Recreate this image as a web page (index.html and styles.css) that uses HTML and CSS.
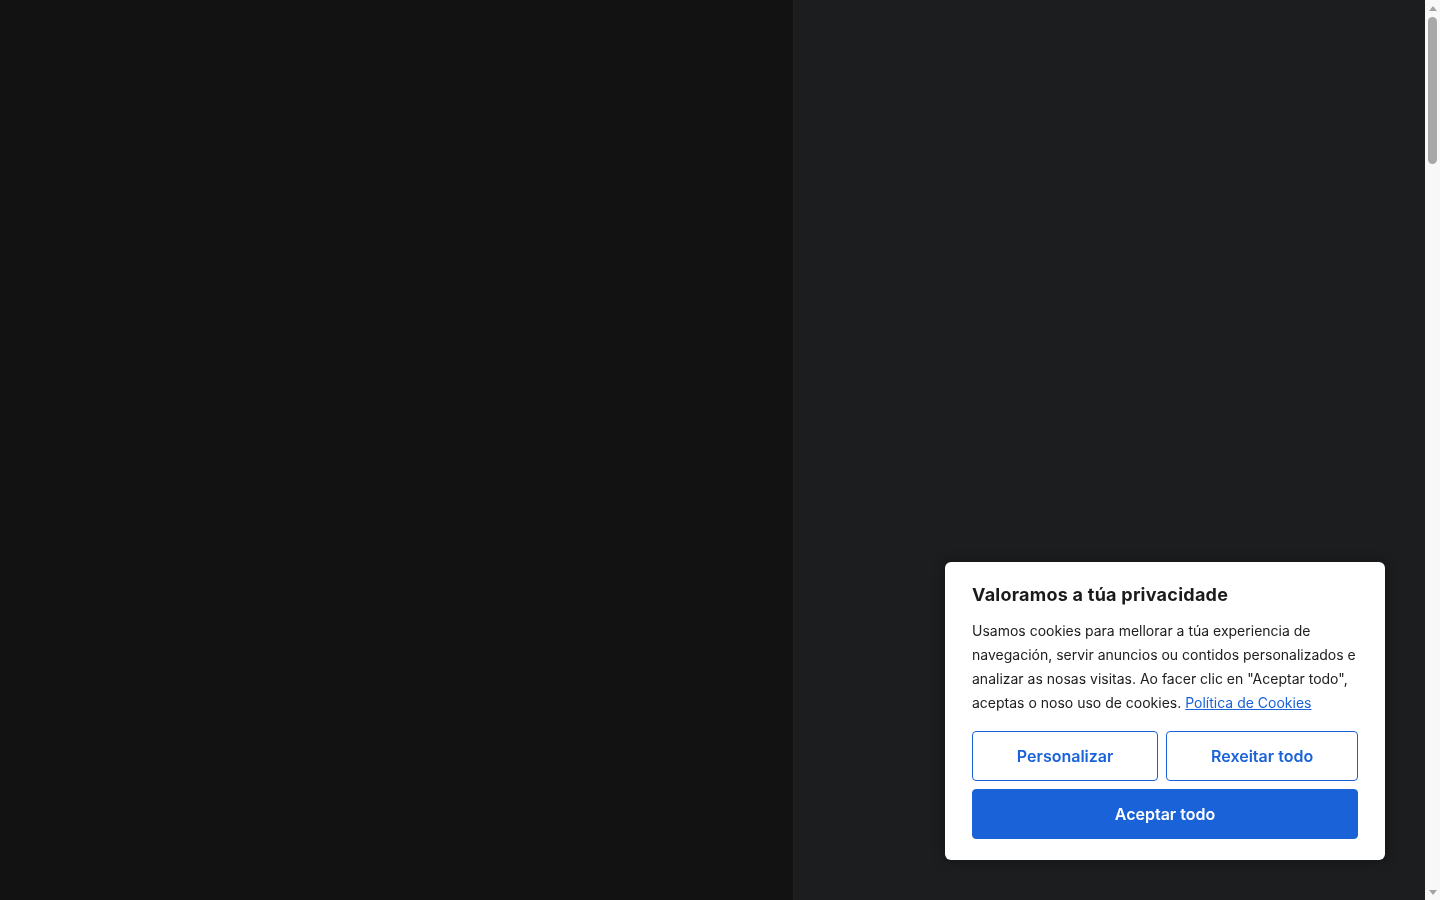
FILE: index.html
```html
<!DOCTYPE html>
<html lang="gl">
<head>
<meta charset="utf-8">
<title>Privacidade</title>
<link rel="stylesheet" href="styles.css">
</head>
<body>
<div class="layout">
  <div class="page">
    <div class="left-pane"></div>
    <div class="right-pane"></div>
  </div>
  <div class="scrollbar" aria-hidden="true">
    <div class="sb-arrow sb-up"></div>
    <div class="sb-track"><div class="sb-thumb"></div></div>
    <div class="sb-arrow sb-down"></div>
  </div>
</div>
<div class="cookie-banner" role="dialog" aria-label="Valoramos a túa privacidade">
  <h2 class="cookie-title">Valoramos a túa privacidade</h2>
  <p class="cookie-text">Usamos cookies para mellorar a túa experiencia de navegación, servir anuncios ou contidos personalizados e analizar as nosas visitas. Ao facer clic en "Aceptar todo", aceptas o noso uso de cookies. <a href="#" class="cookie-link">Política de Cookies</a></p>
  <div class="cookie-actions">
    <div class="cookie-row">
      <button class="btn btn-outline">Personalizar</button>
      <button class="btn btn-outline">Rexeitar todo</button>
    </div>
    <button class="btn btn-primary">Aceptar todo</button>
  </div>
</div>
</body>
</html>
```
FILE: styles.css
```css
html, body {
  margin: 0;
  padding: 0;
  height: 100%;
  overflow: hidden;
}
body {
  background: #1c1d1f;
  font-family: "Inter", "Noto Sans", "Liberation Sans", sans-serif;
}
.layout {
  display: flex;
  height: 100vh;
}
.page {
  flex: 1;
  display: flex;
}
.left-pane {
  flex: 0 0 793px;
  background: #121212;
}
.right-pane {
  flex: 1;
  background: #1c1d1f;
  border-left: 1px solid #202124;
}
.scrollbar {
  flex: 0 0 15px;
  display: flex;
  flex-direction: column;
  align-items: center;
  background: #f8f8f8;
}
.sb-arrow {
  flex: 0 0 15px;
  width: 15px;
  display: flex;
  align-items: center;
  justify-content: center;
}
.sb-up::before {
  content: "";
  width: 0;
  height: 0;
  border-left: 4px solid transparent;
  border-right: 4px solid transparent;
  border-bottom: 5px solid #a3a3a3;
  margin-top: 1px;
}
.sb-down::before {
  content: "";
  width: 0;
  height: 0;
  border-left: 4px solid transparent;
  border-right: 4px solid transparent;
  border-top: 5px solid #a3a3a3;
  margin-bottom: 1px;
}
.sb-track {
  flex: 1;
  width: 15px;
  display: flex;
  justify-content: center;
  padding-top: 2px;
  box-sizing: border-box;
}
.sb-thumb {
  width: 9px;
  height: 147px;
  border-radius: 5px;
  background: #a8a8a8;
}
.cookie-banner {
  position: fixed;
  right: 55px;
  bottom: 40px;
  width: 440px;
  box-sizing: border-box;
  background: #ffffff;
  border-radius: 6px;
  padding: 21px 27px 21px;
  box-shadow: 0 0 12px rgba(0, 0, 0, 0.35);
}
.cookie-title {
  margin: 0 0 12px;
  font-size: 18px;
  line-height: 24px;
  font-weight: 700;
  letter-spacing: 0.25px;
  color: #1b1b1b;
}
.cookie-text {
  margin: 0 0 16px;
  font-size: 14px;
  line-height: 24px;
  color: #202020;
}
.cookie-link {
  color: #1a62d8;
  text-decoration: underline;
}
.cookie-actions {
  display: flex;
  flex-direction: column;
  gap: 8px;
}
.cookie-row {
  display: flex;
  gap: 8px;
}
.btn {
  font-family: inherit;
  font-size: 16px;
  font-weight: 600;
  height: 50px;
  border-radius: 4px;
  cursor: pointer;
  box-sizing: border-box;
}
.btn-outline {
  flex: 1 1 auto;
  background: #ffffff;
  color: #1a62d8;
  border: 1px solid #1a62d8;
}
.btn-primary {
  width: 100%;
  background: #1a62d8;
  color: #ffffff;
  border: 1px solid #1a62d8;
}
```
